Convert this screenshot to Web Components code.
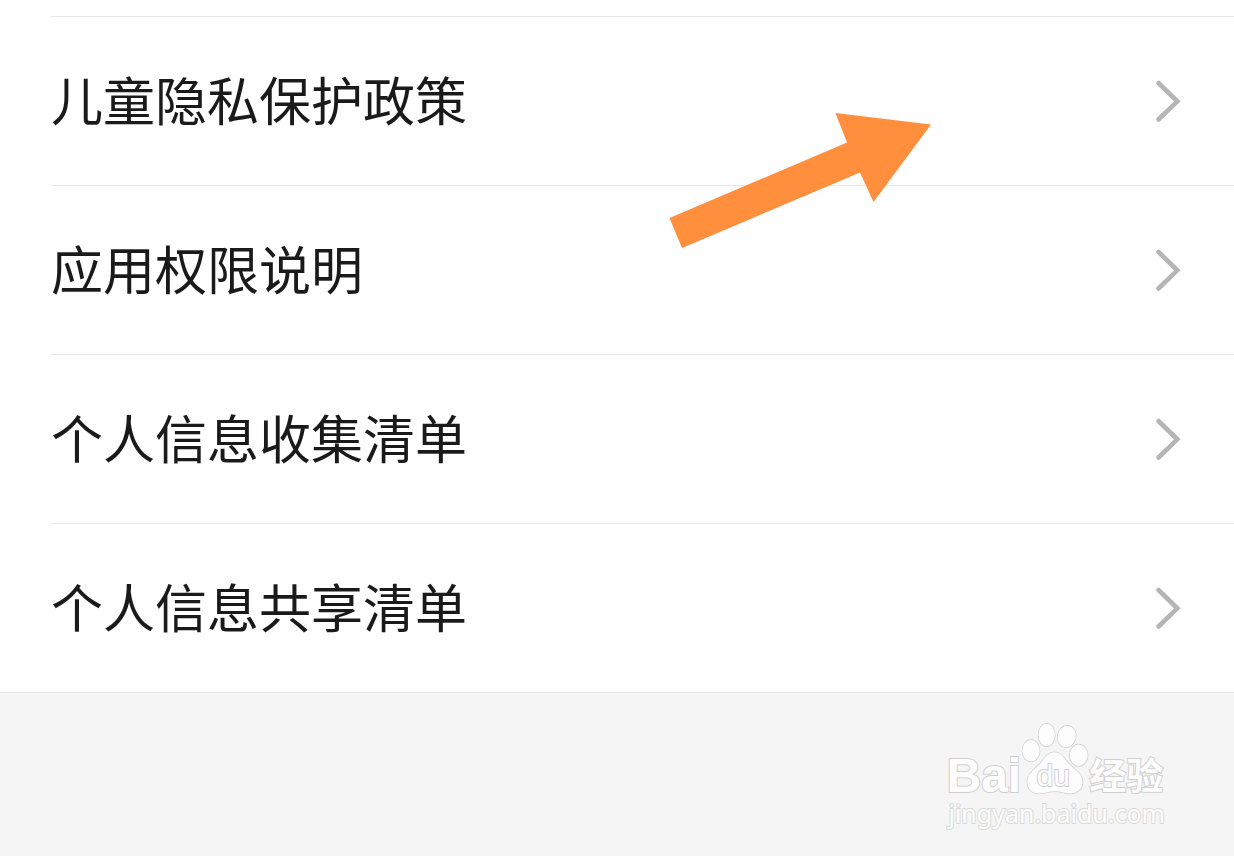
<!DOCTYPE html>
<html lang="zh-CN">
<head>
<meta charset="utf-8">
<meta name="viewport" content="width=device-width, initial-scale=1">
<title>隐私政策</title>
<style>
body { margin: 0; background: #f5f5f5; color: #1a1a1a; font-family: "Noto Sans CJK SC", sans-serif; }
</style>
</head>
<body>
<settings-page>
  <settings-row>儿童隐私保护政策</settings-row>
  <settings-row>应用权限说明</settings-row>
  <settings-row>个人信息收集清单</settings-row>
  <settings-row>个人信息共享清单</settings-row>
  <pointer-arrow slot="overlay"></pointer-arrow>
  <site-watermark slot="footer"></site-watermark>
</settings-page>
<script>
const define = (name, html) => {
  const template = document.createElement('template');
  template.innerHTML = html;
  customElements.define(name, class extends HTMLElement {
    constructor() {
      super();
      this.attachShadow({ mode: 'open' }).append(template.content.cloneNode(true));
    }
  });
};

define('settings-row', `
<style>
:host { display: block; margin-left: 51px; border-top: 1px solid #e8e8e8; }
a { display: flex; align-items: center; justify-content: space-between; height: 168px; padding-right: 53px; color: inherit; text-decoration: none; font-size: 52px; line-height: 76px; }
span { padding-bottom: 4px; }
svg { flex: none; }
</style>
<a href="#"><span><slot></slot></span>
<svg width="28" height="44" viewBox="0 0 28 44" fill="none" stroke="#b5b5b5" stroke-width="4.6" stroke-linecap="round" aria-hidden="true"><path d="M5.5 4 24.3 22.3 5.5 40.5"/></svg></a>`);

define('settings-page', `
<style>
:host { display: block; }
main { position: relative; padding-top: 16px; background: #fefefe; border-bottom: 1px solid #e8e8e8; }
footer { display: flex; justify-content: flex-end; padding: 30px 69px 24px 0; }
</style>
<main><slot></slot><slot name="overlay"></slot></main>
<footer><slot name="footer"></slot></footer>`);

define('pointer-arrow', `
<style>
:host { position: absolute; top: 112px; right: 302px; pointer-events: none; }
svg { display: block; }
</style>
<svg width="264" height="137" viewBox="0 0 264 137" fill="#ff8f3c" aria-hidden="true"><path d="M167.5 1 263 12.5 205.5 90 192 60.5 14 136 1.5 106 179 30.5Z"/></svg>`);

define('site-watermark', `
<style>
:host { display: block; }
a { display: block; color: #fdfdfd; text-decoration: none; paint-order: stroke fill; -webkit-text-stroke: 2px #d0d0d0; }
.logo { display: flex; align-items: flex-end; height: 72px; font-weight: 700; }
.bai { font: 700 48px/38px "Liberation Sans", sans-serif; }
.paw { display: grid; place-items: end center; }
.paw > * { grid-area: 1 / 1; }
svg { display: block; }
.du { padding-right: 4px; font: 400 30px/38px "Liberation Sans", sans-serif; }
.name { font-size: 37px; line-height: 42px; }
.url { padding-left: 2px; font: 400 25px/36px "Noto Sans", sans-serif; -webkit-text-stroke: 2px #dadada; }
</style>
<a href="#">
<div class="logo"><span class="bai">Bai</span><span class="paw">
<svg width="68" height="72" viewBox="0 0 68 72" fill="#fdfdfd" stroke="#d0d0d0" stroke-width="1.5" aria-hidden="true">
<ellipse cx="10" cy="27.7" rx="8.7" ry="10.7"/><ellipse cx="25.7" cy="12" rx="8.2" ry="11.3"/><ellipse cx="45.7" cy="13.5" rx="9" ry="10.8" transform="rotate(12 45.7 13.5)"/><ellipse cx="57.7" cy="32.3" rx="9" ry="10.7"/>
<path d="M33.3 29.3C39 29.3 42 33 45 37.5 50 44.5 61.5 49 61.5 58.5 61.5 67 55 71 48 70.5 43 70 40 68.2 34 68.2 28 68.2 24 70.5 18 70.5 11 70.5 6.3 66 6.3 58.5 6.3 50 15 46 20.5 39 25 33 28 29.3 33.3 29.3Z"/></svg>
<span class="du">du</span></span><span class="name">经验</span></div>
<div class="url">jingyan.baidu.com</div>
</a>`);
</script>
</body>
</html>
